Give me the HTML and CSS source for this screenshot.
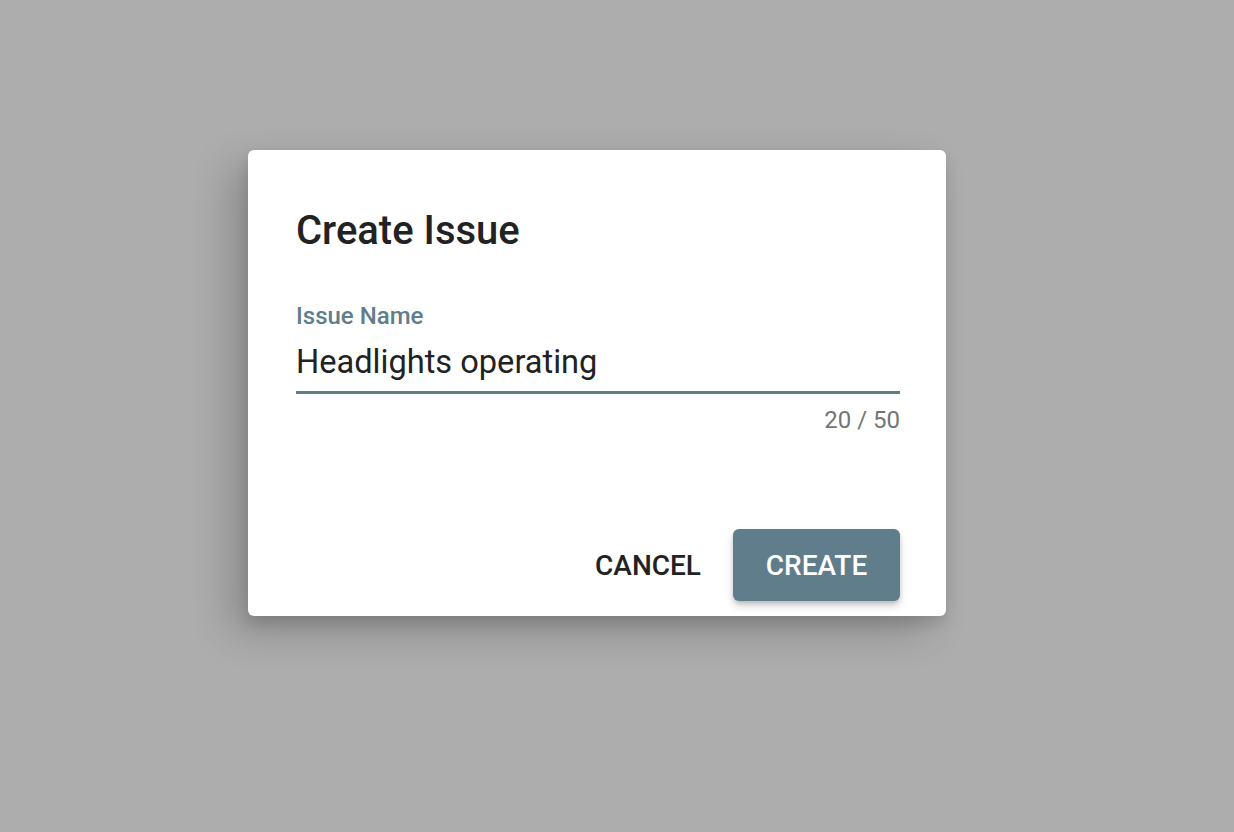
FILE: index.html
```html
<!DOCTYPE html>
<html lang="en">
<head>
  <meta charset="UTF-8" />
  <title>Create Issue</title>
  <link rel="stylesheet" href="styles.css">
</head>
<body>
  <div class="backdrop">
    <div class="dialog">
      <h2 class="dialog-title">Create Issue</h2>

      <div class="field">
        <label class="field-label" for="issueName">Issue Name</label>
        <input class="field-input" id="issueName" type="text" value="Headlights operating" maxlength="50" />
        <div class="field-counter">20 / 50</div>
      </div>

      <div class="actions">
        <button class="btn btn-text">Cancel</button>
        <button class="btn btn-primary">Create</button>
      </div>
    </div>
  </div>
</body>
</html>
```

FILE: styles.css
```css
body {
  margin: 0;
  font-family: Roboto, "Liberation Sans", sans-serif;
  background: #adadad;
  min-height: 100vh;
}

.backdrop {
  padding: 150px 0 0 248px;
}

.dialog {
  width: 698px;
  height: 466px;
  box-sizing: border-box;
  background: #fff;
  border-radius: 6px;
  padding: 0 46px 0 48px;
  display: flex;
  flex-direction: column;
  box-shadow: -18px 16px 40px rgba(0,0,0,0.2),
              0 8px 14px rgba(0,0,0,0.12);
}

.dialog-title {
  margin: 57px 0 0;
  font-size: 40px;
  font-weight: 500;
  line-height: 48px;
  color: #222;
}

.field {
  margin-top: 47px;
}

.field-label {
  display: block;
  font-size: 24px;
  font-weight: 500;
  color: #607d8b;
  line-height: 28px;
}

.field-input {
  display: block;
  width: 100%;
  box-sizing: border-box;
  border: none;
  border-bottom: 3px solid #607d8b;
  outline: none;
  padding: 13px 0 10px;
  font-family: inherit;
  font-size: 32.6px;
  line-height: 38px;
  height: 64px;
  color: #222;
  background: transparent;
}

.field-counter {
  margin-top: 12px;
  text-align: right;
  font-size: 24px;
  line-height: 28px;
  color: #757575;
}

.actions {
  margin-top: auto;
  margin-bottom: 15px;
  display: flex;
  justify-content: flex-end;
  align-items: center;
  gap: 32px;
}

.btn {
  font-family: inherit;
  font-weight: 500;
  text-transform: uppercase;
  font-size: 28px;
  border: none;
  cursor: pointer;
}

.btn-text {
  background: none;
  color: #222;
  padding: 0;
}

.btn-primary {
  width: 167px;
  height: 72px;
  border-radius: 6px;
  background: #607d8b;
  color: #fff;
  box-shadow: 0 3px 5px -1px rgba(0,0,0,0.2), 0 5px 10px rgba(0,0,0,0.14);
}
```
